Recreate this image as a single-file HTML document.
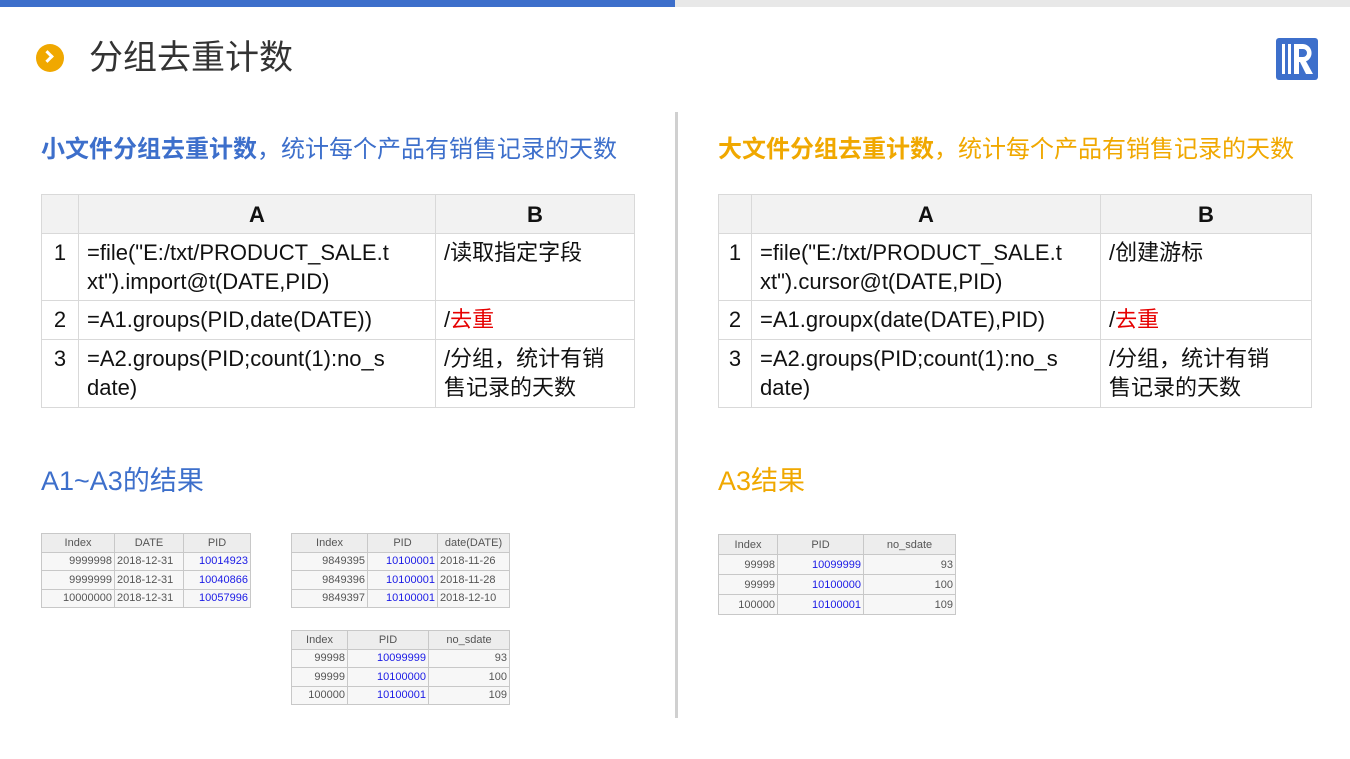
<!DOCTYPE html>
<html><head><meta charset="utf-8"><style>
*{margin:0;padding:0;box-sizing:border-box}
body{width:1350px;height:759px;background:#fff;position:relative;overflow:hidden;font-family:"Liberation Sans","Noto Sans CJK SC",sans-serif}
.a{position:absolute}
table{border-collapse:collapse;table-layout:fixed;position:absolute}
.m td{border:1px solid #d9d9d9;font-size:22px;color:#111;vertical-align:top;padding:4px 0 0 8px;line-height:29px;white-space:nowrap;overflow:hidden}
.m tr.h td{background:#f2f2f2;font-weight:bold;text-align:center;vertical-align:middle;padding:0}
.m td.n{text-align:center;padding:4px 0 0}
.s td{border:1px solid #c8c8c8;font-size:11px;color:#555;text-align:right;padding:0 2px;line-height:14px;height:18.5px;white-space:nowrap;background:#f7f7f7}
.s tr.h td{text-align:center;background:#ededed}
.s .b{color:#1a1ae6}
.r{color:#e60000}
</style></head><body>
<div class="a" style="left:0;top:0;width:675px;height:7px;background:#3d6fcb"></div>
<div class="a" style="left:675px;top:0;width:675px;height:7px;background:#e8e8e8"></div>
<div class="a" style="left:36px;top:44px;width:28px;height:28px;border-radius:50%;background:#f0a800"></div>
<div class="a" style="left:43px;top:52px;width:9px;height:9px;border-top:3px solid #fff;border-right:3px solid #fff;transform:rotate(45deg)"></div>
<div class="a" style="left:89px;top:36px;font-size:34px;color:#333;line-height:44px">分组去重计数</div>
<svg class="a" style="left:1276px;top:38px" width="42" height="42" viewBox="0 0 42 42"><rect width="42" height="42" rx="3" fill="#3d6fcb"/><rect x="6" y="6" width="3" height="30" fill="#fff"/><rect x="12" y="6" width="3" height="30" fill="#fff"/><path d="M18 6h9a9 9 0 0 1 3 17.3l7 12.7h-7l-6-12h-1v-5h4a4 4 0 0 0 0-8h-4v25h-5z" fill="#fff"/></svg>
<div class="a" style="left:675px;top:112px;width:3px;height:606px;background:#d0d0d0"></div>

<div class="a" style="left:41px;top:134px;font-size:24px;line-height:32px;color:#3d6fcb"><b>小文件分组去重计数</b>，统计每个产品有销售记录的天数</div>
<div class="a" style="left:718px;top:134px;font-size:24px;line-height:32px;color:#f0a800"><b>大文件分组去重计数</b>，统计每个产品有销售记录的天数</div>

<table class="m" style="left:41px;top:194px;width:593px">
<colgroup><col style="width:37px"><col style="width:357px"><col style="width:199px"></colgroup>
<tr class="h" style="height:39px"><td></td><td>A</td><td>B</td></tr>
<tr style="height:67px"><td class="n">1</td><td>=file("E:/txt/PRODUCT_SALE.t<br>xt").import@t(DATE,PID)</td><td>/读取指定字段</td></tr>
<tr style="height:39px"><td class="n">2</td><td>=A1.groups(PID,date(DATE))</td><td>/<span class="r">去重</span></td></tr>
<tr style="height:68px"><td class="n">3</td><td>=A2.groups(PID;count(1):no_s<br>date)</td><td>/分组，统计有销<br>售记录的天数</td></tr>
</table>
<table class="m" style="left:718px;top:194px;width:593px">
<colgroup><col style="width:33px"><col style="width:349px"><col style="width:211px"></colgroup>
<tr class="h" style="height:39px"><td></td><td>A</td><td>B</td></tr>
<tr style="height:67px"><td class="n">1</td><td>=file("E:/txt/PRODUCT_SALE.t<br>xt").cursor@t(DATE,PID)</td><td>/创建游标</td></tr>
<tr style="height:39px"><td class="n">2</td><td>=A1.groupx(date(DATE),PID)</td><td>/<span class="r">去重</span></td></tr>
<tr style="height:68px"><td class="n">3</td><td>=A2.groups(PID;count(1):no_s<br>date)</td><td>/分组，统计有销<br>售记录的天数</td></tr>
</table>

<div class="a" style="left:41px;top:463px;font-size:27px;line-height:36px;color:#3d6fcb">A1~A3的结果</div>
<div class="a" style="left:718px;top:463px;font-size:27px;line-height:36px;color:#f0a800">A3结果</div>

<table class="s" style="left:41px;top:533px;width:209px">
<colgroup><col style="width:73px"><col style="width:69px"><col style="width:67px"></colgroup>
<tr class="h"><td>Index</td><td>DATE</td><td>PID</td></tr>
<tr><td>9999998</td><td style="text-align:left">2018-12-31</td><td class="b">10014923</td></tr>
<tr><td>9999999</td><td style="text-align:left">2018-12-31</td><td class="b">10040866</td></tr>
<tr><td>10000000</td><td style="text-align:left">2018-12-31</td><td class="b">10057996</td></tr>
</table>
<table class="s" style="left:291px;top:533px;width:218px">
<colgroup><col style="width:76px"><col style="width:70px"><col style="width:72px"></colgroup>
<tr class="h"><td>Index</td><td>PID</td><td>date(DATE)</td></tr>
<tr><td>9849395</td><td class="b">10100001</td><td style="text-align:left">2018-11-26</td></tr>
<tr><td>9849396</td><td class="b">10100001</td><td style="text-align:left">2018-11-28</td></tr>
<tr><td>9849397</td><td class="b">10100001</td><td style="text-align:left">2018-12-10</td></tr>
</table>
<table class="s" style="left:291px;top:630px;width:218px">
<colgroup><col style="width:56px"><col style="width:81px"><col style="width:81px"></colgroup>
<tr class="h"><td>Index</td><td>PID</td><td>no_sdate</td></tr>
<tr><td>99998</td><td class="b">10099999</td><td>93</td></tr>
<tr><td>99999</td><td class="b">10100000</td><td>100</td></tr>
<tr><td>100000</td><td class="b">10100001</td><td>109</td></tr>
</table>
<table class="s" style="left:718px;top:534px;width:237px">
<colgroup><col style="width:59px"><col style="width:86px"><col style="width:92px"></colgroup>
<tr class="h" style="height:20px"><td>Index</td><td>PID</td><td>no_sdate</td></tr>
<tr style="height:20px"><td>99998</td><td class="b">10099999</td><td>93</td></tr>
<tr style="height:20px"><td>99999</td><td class="b">10100000</td><td>100</td></tr>
<tr style="height:20px"><td>100000</td><td class="b">10100001</td><td>109</td></tr>
</table>
</body></html>
